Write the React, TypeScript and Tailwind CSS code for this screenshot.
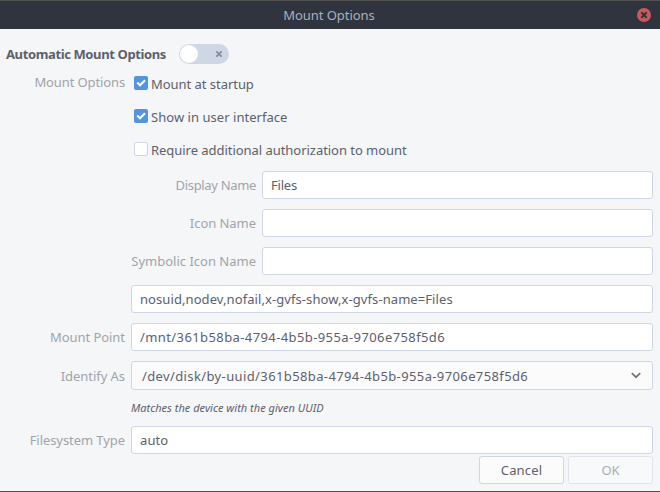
import type { ReactNode } from "react";

const field =
  "flex h-7 items-center rounded-[3px] border border-[#cfd6e6] bg-white pl-2 text-[#5c616c] whitespace-pre";

function Label({ children, className = "" }: { children: ReactNode; className?: string }) {
  return (
    <span className={`shrink-0 whitespace-nowrap pr-1.5 text-right text-[#9fa4ab] ${className}`}>{children}</span>
  );
}

function CheckRow({ checked = false, label, spacing }: { checked?: boolean; label: string; spacing: string }) {
  return (
    <div className="flex h-[33px] items-start">
      <span
        className={`ml-[3px] block size-3.5 shrink-0 rounded-[2px] ${
          checked ? "bg-[#5294e2]" : "border border-[#cfd6e6] bg-white"
        }`}
      >
        {checked && (
          <svg viewBox="0 0 14 14" className="size-3.5" fill="none" stroke="#fff" strokeWidth="2.2">
            <path d="M3.2 6.5 L6 9.2 L11 4.2" />
          </svg>
        )}
      </span>
      <span className={`ml-[3px] whitespace-nowrap leading-4 text-[#5c616c] ${spacing}`}>{label}</span>
    </div>
  );
}

export default function App() {
  return (
    <div className="flex h-[492px] w-[660px] flex-col overflow-hidden border-y border-t-[#51514f] border-b-[#51514f] bg-[#f5f6f8] font-['Noto_Sans','Open_Sans',sans-serif] text-[13px] leading-[18px] text-[#5c616c]">
      <header className="flex h-7 shrink-0 items-center bg-[#2f343f] pr-[9px]">
        <span className="w-[21px]" />
        <h1 className="flex-1 text-center tracking-[-0.06px] text-[#a9b0bd]">Mount Options</h1>
        <button className="size-3.5 rounded-full bg-[#cc575d]" aria-label="Close">
          <svg viewBox="0 0 14 14" className="size-3.5" stroke="#2f343f" strokeWidth="2">
            <path d="M4.3 4.3 L9.7 9.7 M9.7 4.3 L4.3 9.7" />
          </svg>
        </button>
      </header>

      <main className="flex flex-1 flex-col pr-[7px] pt-[15px]">
        <div className="flex h-5 items-center pl-1.5">
          <span className="w-[173px] whitespace-nowrap font-bold tracking-[-0.38px]">Automatic Mount Options</span>
          <span className="flex h-5 w-[50px] items-center justify-between rounded-full bg-[#cfd6e6] pl-px pr-1.5">
            <span className="size-[18px] rounded-full bg-white" />
            <svg viewBox="0 0 8 8" className="size-2" stroke="#868b97" strokeWidth="1.7">
              <path d="M1.3 1.3 L6.7 6.7 M6.7 1.3 L1.3 6.7" />
            </svg>
          </span>
        </div>

        <div className="mt-3 flex h-[95px] items-start">
          <Label className="-mt-[3px] w-[131px] tracking-[-0.12px]">Mount Options</Label>
          <div className="flex flex-col">
            <CheckRow checked label="Mount at startup" spacing="tracking-[-0.04px]" />
            <CheckRow checked label="Show in user interface" spacing="tracking-[0.04px]" />
            <CheckRow label="Require additional authorization to mount" spacing="tracking-[-0.04px]" />
          </div>
        </div>

        <div className="flex flex-col gap-2.5">
          <div className="flex items-center">
            <Label className="w-[262px] tracking-[-0.33px]">Display Name</Label>
            <div className={`${field} flex-1 tracking-[-0.2px]`}>Files</div>
          </div>
          <div className="flex items-center">
            <Label className="w-[262px] tracking-[-0.05px]">Icon Name</Label>
            <div className={`${field} flex-1`} />
          </div>
          <div className="flex items-center">
            <Label className="w-[262px] tracking-[0px]">Symbolic Icon Name</Label>
            <div className={`${field} flex-1`} />
          </div>
          <div className="flex items-center pl-[131px]">
            <div className={`${field} flex-1 tracking-[0.08px]`}>nosuid,nodev,nofail,x-gvfs-show,x-gvfs-name=Files</div>
          </div>
          <div className="flex items-center">
            <Label className="w-[131px] tracking-[-0.05px]">Mount Point</Label>
            <div className={`${field} flex-1 tracking-[0.4px]`}>/mnt/361b58ba-4794-4b5b-955a-9706e758f5d6</div>
          </div>
          <div className="flex items-center">
            <Label className="w-[131px] tracking-[-0.05px]">Identify As</Label>
            <div className="flex h-[29px] flex-1 items-center justify-between rounded-[3px] border border-[#cfd6e6] bg-[#fbfbfc] pl-2.5 pr-[11px]">
              <span className="tracking-[0.38px]">/dev/disk/by-uuid/361b58ba-4794-4b5b-955a-9706e758f5d6</span>
              <svg viewBox="0 0 10 8" className="h-2 w-2.5" fill="none" stroke="#70757f" strokeWidth="1.8">
                <path d="M0.8 1.2 L5 5.2 L9.2 1.2" />
              </svg>
            </div>
          </div>
        </div>

        <p className="mt-[9px] h-[18px] pl-[131px] text-[11px] italic tracking-[0.02px]">Matches the device with the given UUID</p>

        <div className="mt-[9px] flex items-center">
          <Label className="w-[131px] tracking-[-0.07px]">Filesystem Type</Label>
          <div className={`${field} flex-1 tracking-[0.1px]`}>auto</div>
        </div>

        <div className="mt-0.5 flex justify-end gap-1">
          <button className="h-7 w-[85px] rounded-[3px] border border-[#cfd6e6] bg-[#fbfbfc] tracking-[0.15px]">Cancel</button>
          <button className="h-7 w-[85px] rounded-[3px] border border-[#e0e4ee] bg-[#f8f9fa] text-[#a9adb5]">OK</button>
        </div>
      </main>
    </div>
  );
}
